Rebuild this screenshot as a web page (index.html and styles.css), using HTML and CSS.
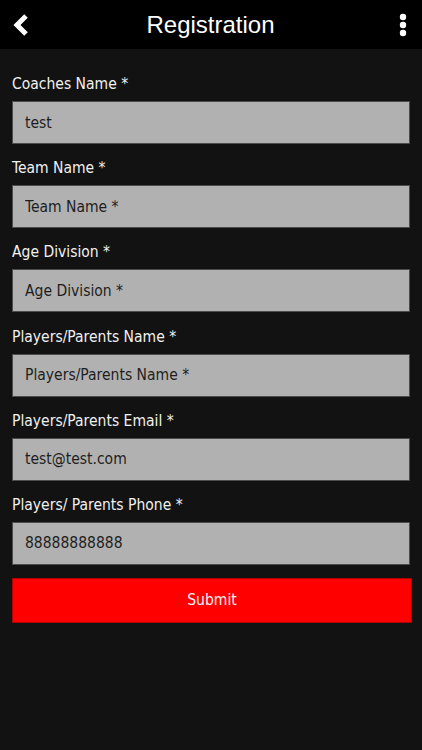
FILE: index.html
```html
<!DOCTYPE html>
<html lang="en">
<head>
  <meta charset="UTF-8" />
  <meta name="viewport" content="width=device-width, initial-scale=1.0"/>
  <title>Registration</title>
  <link rel="stylesheet" href="styles.css">
</head>
<body>

  <div class="topbar">
    <button class="icon-btn back-btn" aria-label="Back">
      <svg width="18" height="22" viewBox="0 0 18 22">
        <path d="M13 2 L4 11 L13 20" fill="none" stroke="#fff" stroke-width="5" stroke-linejoin="miter"/>
      </svg>
    </button>
    <h1>Registration</h1>
    <button class="icon-btn menu-btn" aria-label="Menu">
      <svg width="8" height="24" viewBox="0 0 8 24">
        <circle cx="4" cy="4" r="3.2" fill="#fff"/>
        <circle cx="4" cy="12" r="3.2" fill="#fff"/>
        <circle cx="4" cy="20" r="3.2" fill="#fff"/>
      </svg>
    </button>
  </div>

  <form class="reg-form" onsubmit="return false">
    <div class="field">
      <label for="coach">Coaches Name *</label>
      <input id="coach" type="text" value="test" placeholder="Coaches Name *">
    </div>
    <div class="field">
      <label for="team">Team Name *</label>
      <input id="team" type="text" placeholder="Team Name *">
    </div>
    <div class="field">
      <label for="age">Age Division *</label>
      <input id="age" type="text" placeholder="Age Division *">
    </div>
    <div class="field">
      <label for="player">Players/Parents Name *</label>
      <input id="player" type="text" placeholder="Players/Parents Name *">
    </div>
    <div class="field">
      <label for="email">Players/Parents Email *</label>
      <input id="email" type="email" value="test@test.com" placeholder="Players/Parents Email *">
    </div>
    <div class="field">
      <label for="phone">Players/ Parents Phone *</label>
      <input id="phone" type="tel" value="88888888888" placeholder="Players/ Parents Phone *">
    </div>
    <button type="submit" class="submit-btn">Submit</button>
  </form>

</body>
</html>
```

FILE: styles.css
```css
:root {
  --bg-color: #121212;
  --bar-color: #000;
  --input-bg: #b1b1b1;
  --input-border: #4c4c4c;
  --text-color: #f0f0f0;
  --input-text: #1e1e1e;
  --accent-color: #ff0000;
  --font-primary: 'DejaVu Sans Condensed', 'DejaVu Sans', sans-serif;
  --font-title: 'Liberation Sans', Arial, sans-serif;
}

* {
  box-sizing: border-box;
  margin: 0;
  padding: 0;
}

body {
  background-color: var(--bg-color);
  color: var(--text-color);
  font-family: var(--font-primary);
  min-height: 100vh;
}

.topbar {
  height: 49px;
  background-color: var(--bar-color);
  display: flex;
  align-items: center;
  justify-content: space-between;
  padding: 0 14px 0 13px;
}

.topbar h1 {
  font-family: var(--font-title);
  font-weight: normal;
  font-size: 24px;
  color: #fff;
  flex: 1;
  text-align: center;
}

.icon-btn {
  background: none;
  border: none;
  width: 20px;
  height: 24px;
  display: flex;
  align-items: center;
  justify-content: center;
  cursor: pointer;
}

.back-btn {
  justify-content: flex-start;
}

.menu-btn {
  justify-content: flex-end;
  padding-right: 1px;
}

.reg-form {
  padding: 25px 12px 0 12px;
}

.field {
  margin-bottom: 14.2px;
}

.field label {
  display: block;
  font-size: 15.5px;
  line-height: 20px;
  margin-bottom: 7px;
}

.field input {
  display: block;
  width: 398px;
  height: 43px;
  padding: 0 12px;
  background-color: var(--input-bg);
  border: 1px solid var(--input-border);
  font-family: var(--font-primary);
  font-size: 15.5px;
  color: var(--input-text);
  outline: none;
}

.field input::placeholder {
  color: var(--input-text);
  opacity: 1;
}

.submit-btn {
  display: block;
  width: 400px;
  height: 45px;
  margin-top: -1.2px;
  background-color: var(--accent-color);
  border: 1px solid #b00000;
  color: #f4f4f4;
  font-family: var(--font-primary);
  font-size: 15.5px;
  cursor: pointer;
}
```
